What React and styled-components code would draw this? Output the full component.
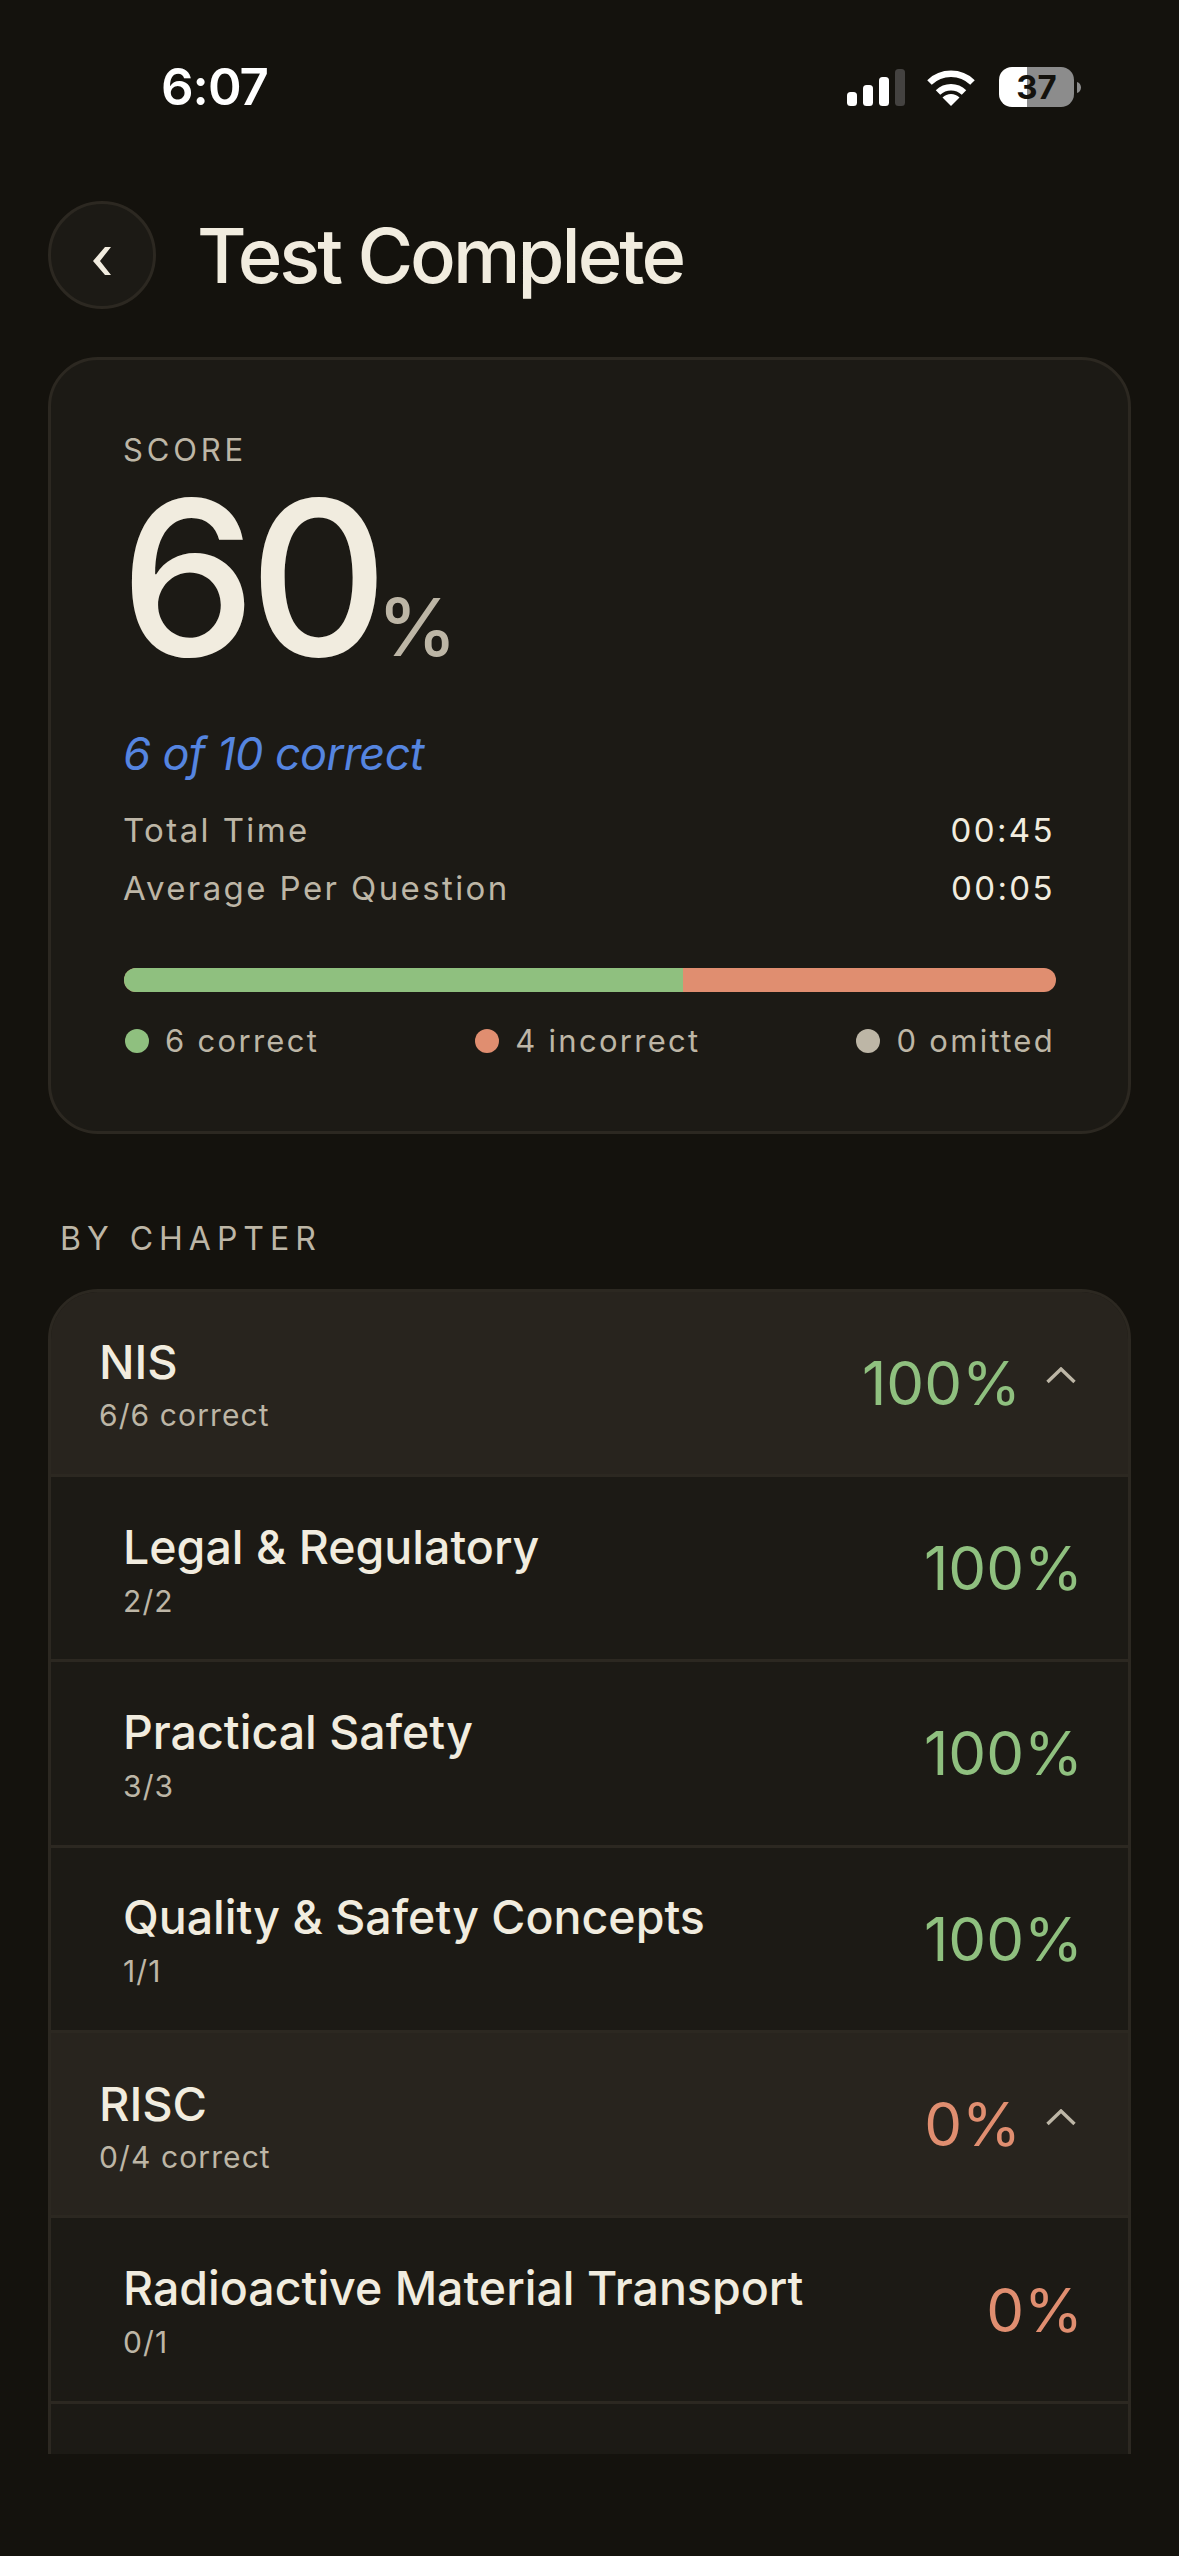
import React from "react";
import styled, { createGlobalStyle } from "styled-components";

const GlobalStyle = createGlobalStyle`
  html, body {
    margin: 0;
    padding: 0;
    background: #14120d;
  }
  * {
    box-sizing: border-box;
  }
`;

const Page = styled.div`
  width: 1179px;
  height: 2556px;
  padding: 67px 48px 0 48px;
  background: #14120d;
  font-family: Inter, "Liberation Sans", sans-serif;
  overflow: hidden;
`;

const StatusBar = styled.div`
  display: flex;
  align-items: center;
  justify-content: space-between;
  height: 40px;
  padding: 0 0 0 113px;
`;

const Clock = styled.div`
  color: #fff;
  font-size: 51px;
  font-weight: 600;
  line-height: 40px;
  letter-spacing: -1px;
`;

const StatusIcons = styled.div`
  display: flex;
  align-items: center;
  gap: 21px;
  margin-right: 50px;
`;

const Battery = styled.div`
  display: flex;
  align-items: center;
  justify-content: center;
  width: 75px;
  height: 40px;
  border-radius: 13px;
  background: linear-gradient(to right, #fff 37%, #8c8c8c 37%);
  color: #14120d;
  font-size: 33px;
  font-weight: 700;
  line-height: 1;
`;

const BatteryWrap = styled.div`
  display: flex;
  align-items: center;
  gap: 3px;
  margin-left: 2px;
`;

const Header = styled.header`
  display: flex;
  align-items: center;
  gap: 41px;
  margin-top: 94px;
`;

const BackButton = styled.button`
  display: flex;
  align-items: center;
  justify-content: center;
  width: 108px;
  height: 108px;
  padding: 0;
  border: 3px solid #2c2821;
  border-radius: 50%;
  background: #1c1a15;
`;

const BackIcon = styled.svg`
  display: block;
  margin-top: 12px;
`;

const Title = styled.h1`
  margin: 0;
  color: #f1ecdf;
  font-size: 76px;
  font-weight: 500;
  line-height: 107px;
  letter-spacing: -3px;
`;

const ScoreCard = styled.section`
  margin-top: 48px;
  padding: 74px 72px 75px 72px;
  border: 3px solid #2c2821;
  border-radius: 50px;
  background: #1c1a15;
`;

const ScoreLabel = styled.div`
  color: #bdb6a6;
  font-size: 31px;
  line-height: 31px;
  letter-spacing: 3.8px;
`;

const ScoreValue = styled.div`
  display: flex;
  align-items: baseline;
  margin: 6px 0 0 -3px;
  color: #f1ecdf;
  font-size: 216px;
  font-weight: 450;
  line-height: 213px;
  letter-spacing: -7px;
`;

const ScoreUnit = styled.span`
  margin-left: -4px;
  color: #bdb6a6;
  font-size: 80px;
  font-weight: 500;
  line-height: 80px;
  letter-spacing: 0;
`;

const ScoreNote = styled.div`
  margin-top: 47px;
  color: #5585e0;
  font-size: 45px;
  font-style: italic;
  line-height: 45px;
  letter-spacing: -0.55px;
`;

const StatList = styled.div`
  display: flex;
  flex-direction: column;
  gap: 25px;
  margin-top: 38px;
`;

const StatRow = styled.div`
  display: flex;
  justify-content: space-between;
  margin-right: 1px;
  color: #bdb6a6;
  font-size: 33px;
  line-height: 33px;
  letter-spacing: 2.4px;
`;

const StatValue = styled.span`
  color: #f1ecdf;
`;

const ResultBar = styled.div`
  display: flex;
  height: 24px;
  margin: 63px 0 0 1px;
  border-radius: 12px;
  overflow: hidden;
  background: #e08e70;
`;

const ResultFill = styled.div`
  background: ${(p) => p.$color};
`;

const Legend = styled.div`
  display: flex;
  justify-content: space-between;
  margin: 33px 1px 0 2px;
`;

const LegendItem = styled.div`
  display: flex;
  align-items: center;
  gap: 16px;
  color: #bdb6a6;
  font-size: 31px;
  line-height: 31px;
  letter-spacing: 2.3px;
`;

const LegendDot = styled.span`
  width: 24px;
  height: 24px;
  border-radius: 50%;
  background: ${(p) => p.$color};
`;

const SectionLabel = styled.div`
  margin: 89px 0 33.5px 12px;
  color: #bdb6a6;
  font-size: 32px;
  line-height: 32px;
  letter-spacing: 6px;
`;

const ChapterList = styled.div`
  height: 1165.5px;
  border: 3px solid #2c2821;
  border-bottom: 0;
  border-radius: 50px 50px 0 0;
  background: #1c1a15;
  overflow: hidden;
`;

const Row = styled.div`
  display: flex;
  align-items: center;
  justify-content: space-between;
  height: 185.4px;
  padding: 0 ${(p) => (p.$group ? "45px 0 48px" : "45px 0 72px")};
  border-bottom: 3px solid #2c2821;
  background: ${(p) => (p.$group ? "#28241e" : "transparent")};
`;

const RowText = styled.div`
  display: flex;
  flex-direction: column;
  gap: 15.5px;
  margin-top: 3px;
`;

const RowTitle = styled.div`
  color: #f1ecdf;
  font-size: ${(p) => (p.$group ? "47px" : "46.5px")};
  font-weight: 500;
  line-height: 1;
`;

const RowSub = styled.div`
  color: #bdb6a6;
  font-size: 30px;
  line-height: 1;
  letter-spacing: 1.1px;
`;

const RowRight = styled.div`
  display: flex;
  align-items: center;
  gap: 25px;
`;

const Percent = styled.div`
  color: ${(p) => p.$color};
  font-size: 60px;
  line-height: 1;
  letter-spacing: 0;
`;

const Chevron = styled.svg`
  display: block;
  margin: 0 7px 14px 0;
`;

const GREEN = "#8fc07f";
const ORANGE = "#e08e70";

const chapters = [
  { title: "NIS", sub: "6/6 correct", pct: "100%", color: GREEN, group: true },
  { title: "Legal & Regulatory", sub: "2/2", pct: "100%", color: GREEN },
  { title: "Practical Safety", sub: "3/3", pct: "100%", color: GREEN },
  { title: "Quality & Safety Concepts", sub: "1/1", pct: "100%", color: GREEN },
  { title: "RISC", sub: "0/4 correct", pct: "0%", color: ORANGE, group: true },
  { title: "Radioactive Material Transport", sub: "0/1", pct: "0%", color: ORANGE },
];

const SignalIcon = () => (
  <svg width="58" height="37" viewBox="0 0 58 37">
    <rect x="0" y="23" width="10" height="14" rx="3.5" fill="#fff" />
    <rect x="16" y="16" width="10" height="21" rx="3.5" fill="#fff" />
    <rect x="32" y="8" width="10" height="29" rx="3.5" fill="#fff" />
    <rect x="48" y="0" width="10" height="37" rx="3.5" fill="#444240" />
  </svg>
);

const WifiIcon = () => (
  <svg width="50" height="37" viewBox="0 0 50 37" fill="none">
    <path d="M3.5 13.5A31 31 0 0 1 46.5 13.5" stroke="#fff" strokeWidth="6.5" />
    <path d="M12 23.5A19 19 0 0 1 38 23.5" stroke="#fff" strokeWidth="6.5" />
    <path d="M25 37L16.5 28.5A12 12 0 0 1 33.5 28.5Z" fill="#fff" />
  </svg>
);

const App = () => (
  <Page>
    <GlobalStyle />
    <StatusBar>
      <Clock>6:07</Clock>
      <StatusIcons>
        <SignalIcon />
        <WifiIcon />
        <BatteryWrap>
          <Battery>37</Battery>
          <svg width="4" height="11" viewBox="0 0 4 11">
            <path d="M0 0C2.5 .8 4 3 4 5.5S2.5 10.2 0 11Z" fill="#8c8c8c" />
          </svg>
        </BatteryWrap>
      </StatusIcons>
    </StatusBar>

    <Header>
      <BackButton aria-label="Back">
        <BackIcon width="18" height="28" viewBox="0 0 18 28">
          <path d="M12 0H18L7 14L18 28H12L0 14Z" fill="#f1ecdf" />
        </BackIcon>
      </BackButton>
      <Title>Test Complete</Title>
    </Header>

    <ScoreCard>
      <ScoreLabel>SCORE</ScoreLabel>
      <ScoreValue>
        60<ScoreUnit>%</ScoreUnit>
      </ScoreValue>
      <ScoreNote>6 of 10 correct</ScoreNote>
      <StatList>
        <StatRow>
          <span>Total Time</span>
          <StatValue>00:45</StatValue>
        </StatRow>
        <StatRow>
          <span>Average Per Question</span>
          <StatValue>00:05</StatValue>
        </StatRow>
      </StatList>
      <ResultBar>
        <ResultFill $color={GREEN} style={{ width: "60%" }} />
      </ResultBar>
      <Legend>
        <LegendItem>
          <LegendDot $color={GREEN} />6 correct
        </LegendItem>
        <LegendItem>
          <LegendDot $color={ORANGE} />4 incorrect
        </LegendItem>
        <LegendItem>
          <LegendDot $color="#bdb6a6" />0 omitted
        </LegendItem>
      </Legend>
    </ScoreCard>

    <SectionLabel>BY CHAPTER</SectionLabel>
    <ChapterList>
      {chapters.map((c) => (
        <Row key={c.title} $group={c.group}>
          <RowText $group={c.group}>
            <RowTitle $group={c.group}>{c.title}</RowTitle>
            <RowSub>{c.sub}</RowSub>
          </RowText>
          <RowRight>
            <Percent $color={c.color}>{c.pct}</Percent>
            {c.group && (
              <Chevron width="30" height="17" viewBox="0 0 30 17" fill="none">
                <path d="M1.5 15L15 2L28.5 15" stroke="#bdb6a6" strokeWidth="3.4" />
              </Chevron>
            )}
          </RowRight>
        </Row>
      ))}
    </ChapterList>
  </Page>
);

export default App;
